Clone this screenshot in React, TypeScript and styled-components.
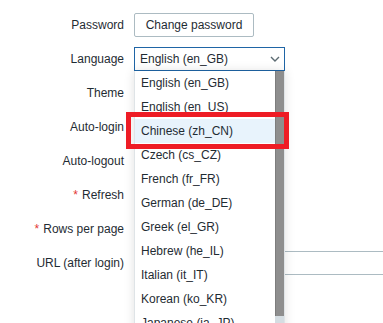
import * as React from 'react';
import styled, { createGlobalStyle } from 'styled-components';

const GlobalStyle = createGlobalStyle`
  html {
    overflow: hidden;
  }
  body {
    margin: 0;
    padding: 0;
    background: #fff;
    font-family: "Liberation Sans", Arial, sans-serif;
    font-size: 12px;
    color: #1f2c33;
  }
`;

const StyledForm = styled.div`
  display: grid;
  grid-template-columns: 124px 1fr;
  column-gap: 10px;
  row-gap: 10px;
  padding-top: 13px;
  padding-bottom: 60px;
  width: 560px;
`;

const StyledLabel = styled.label`
  height: 24px;
  display: flex;
  align-items: center;
  justify-content: flex-end;
  white-space: nowrap;
`;

const StyledAsterisk = styled.span`
  color: #e33734;
  margin-right: 4px;
`;

const StyledControl = styled.div<{ $raised?: boolean }>`
  height: 24px;
  display: flex;
  align-items: center;
  position: relative;
  z-index: ${(p) => (p.$raised ? 5 : 'auto')};
`;

const StyledButton = styled.button`
  height: 24px;
  width: 120px;
  box-sizing: border-box;
  background: #fff;
  border: 1px solid #acbbc2;
  border-radius: 2px;
  font-family: inherit;
  font-size: 12px;
  color: #1f2c33;
  padding: 0 8px;
`;

const StyledSelect = styled.div<{ $focused?: boolean }>`
  height: 24px;
  width: 151px;
  box-sizing: border-box;
  border: 1px solid ${(p) => (p.$focused ? '#1f65a6' : '#acbbc2')};
  display: flex;
  align-items: center;
  justify-content: space-between;
  padding: 0 4px 0 5px;
  background: #fff;
`;

const StyledTextInput = styled.div<{ $width: number }>`
  height: 24px;
  width: ${(p) => p.$width}px;
  box-sizing: border-box;
  border: 1px solid #acbbc2;
  background: #fff;
`;

const StyledCheckbox = styled.span`
  width: 12px;
  height: 12px;
  border: 1px solid #acbbc2;
  background: #fff;
`;

const StyledDropdown = styled.div`
  position: absolute;
  top: 24px;
  left: 0;
  width: 151px;
  height: 270px;
  box-sizing: border-box;
  border-left: 1px solid #dfe4e7;
  border-right: 1px solid #dfe4e7;
  background: #fff;
  box-shadow: 0 0 10px rgba(0, 0, 0, 0.12);
  display: flex;
  z-index: 10;
`;

const StyledOptions = styled.ul`
  list-style: none;
  margin: 0;
  padding: 0;
  flex: 1;
  overflow: hidden;
`;

const StyledOption = styled.li<{ $hover?: boolean }>`
  height: 24px;
  line-height: 24px;
  padding-left: 6px;
  white-space: nowrap;
  background: ${(p) => (p.$hover ? '#e8f3fc' : '#fff')};
`;

const StyledScrollbar = styled.div`
  width: 9px;
  background: #d5dde2;
  display: flex;
  flex-direction: column;
`;

const StyledThumb = styled.div`
  height: 245px;
  background: #8e8e8e;
  border-left: 1px solid #7d7d7d;
  box-sizing: border-box;
`;

const StyledHighlight = styled.div`
  position: absolute;
  left: -8px;
  top: 65px;
  width: 163px;
  height: 37px;
  box-sizing: border-box;
  border: 5px solid #ee1c25;
  pointer-events: none;
  z-index: 11;
`;

const languages = [
  'English (en_GB)',
  'English (en_US)',
  'Chinese (zh_CN)',
  'Czech (cs_CZ)',
  'French (fr_FR)',
  'German (de_DE)',
  'Greek (el_GR)',
  'Hebrew (he_IL)',
  'Italian (it_IT)',
  'Korean (ko_KR)',
  'Japanese (ja_JP)',
];

const Chevron: React.FC = () => (
  <svg width="10" height="6" viewBox="0 0 10 6">
    <path d="M1 1 L5 5 L9 1" fill="none" stroke="#5c6b72" strokeWidth="1.4" />
  </svg>
);

export default function App() {
  return (
    <>
      <GlobalStyle />
      <StyledForm>
        <StyledLabel>Password</StyledLabel>
        <StyledControl>
          <StyledButton>Change password</StyledButton>
        </StyledControl>

        <StyledLabel>Language</StyledLabel>
        <StyledControl $raised>
          <StyledSelect $focused>
            <span>English (en_GB)</span>
            <Chevron />
          </StyledSelect>
          <StyledDropdown>
            <StyledOptions>
              {languages.map((lang) => (
                <StyledOption key={lang} $hover={lang === 'Chinese (zh_CN)'}>
                  {lang}
                </StyledOption>
              ))}
            </StyledOptions>
            <StyledScrollbar>
              <StyledThumb />
            </StyledScrollbar>
          </StyledDropdown>
          <StyledHighlight />
        </StyledControl>

        <StyledLabel>Theme</StyledLabel>
        <StyledControl>
          <StyledSelect>
            <span>System default</span>
            <Chevron />
          </StyledSelect>
        </StyledControl>

        <StyledLabel>Auto-login</StyledLabel>
        <StyledControl>
          <StyledCheckbox />
        </StyledControl>

        <StyledLabel>Auto-logout</StyledLabel>
        <StyledControl>
          <StyledCheckbox />
        </StyledControl>

        <StyledLabel>
          <StyledAsterisk>*</StyledAsterisk>Refresh
        </StyledLabel>
        <StyledControl>
          <StyledTextInput $width={100} />
        </StyledControl>

        <StyledLabel>
          <StyledAsterisk>*</StyledAsterisk>Rows per page
        </StyledLabel>
        <StyledControl>
          <StyledTextInput $width={100} />
        </StyledControl>

        <StyledLabel>URL (after login)</StyledLabel>
        <StyledControl>
          <StyledTextInput $width={400} />
        </StyledControl>
      </StyledForm>
    </>
  );
}
